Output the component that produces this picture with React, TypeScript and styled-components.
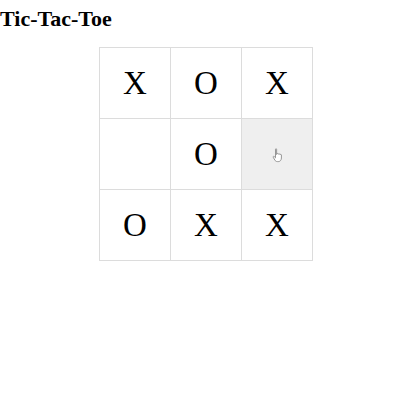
import React from "react";
import styled, { createGlobalStyle } from "styled-components";

const Global = createGlobalStyle`
  html, body { margin: 0; padding: 0; background: #fff; }
  body { font-family: "Liberation Serif", "Times New Roman", serif; color: #000; }
`;

const Page = styled.div`
  display: flex;
  flex-direction: column;
  align-items: flex-start;
  width: 400px;
  height: 408px;
`;

const Title = styled.h1`
  margin: 0;
  padding-top: 7px;
  font-size: 22px;
  line-height: 24px;
  font-weight: bold;
`;

const Board = styled.div`
  margin: 16px 0 0 99px;
  display: grid;
  grid-template-columns: repeat(3, 70px);
  grid-template-rows: repeat(3, 70px);
  gap: 1px;
  padding: 1px;
  background: #dcdcdc;
`;

const Cell = styled.div<{ $hover?: boolean }>`
  position: relative;
  display: flex;
  align-items: center;
  justify-content: center;
  background: ${(p) => (p.$hover ? "#efefef" : "#fff")};
  font-size: 33px;
  line-height: 1;
`;

const Cursor = styled.svg`
  position: absolute;
  left: 30px;
  top: 29px;
`;

const cells = ["X", "O", "X", "", "O", "", "O", "X", "X"];

export default function App() {
  return (
    <Page>
      <Global />
      <Title>Tic-Tac-Toe</Title>
      <Board>
        {cells.map((c, i) => (
          <Cell key={i} $hover={i === 5}>
            {c}
            {i === 5 && (
              <Cursor width="12" height="15" viewBox="0 0 12 15">
                <path
                  d="M3.5 1.2 C3.5 0.6 4.6 0.6 4.6 1.2 V6.5 L5 5.8 C5.3 5.3 6.2 5.5 6.2 6.1 L6.6 6 C7 5.6 7.8 5.8 7.8 6.4 L8.2 6.4 C8.6 6.1 9.4 6.3 9.4 6.9 V10 C9.4 12 8.2 13.6 6.3 13.6 H5.4 C4.2 13.6 3.4 13 2.8 12 L1.2 9.2 C0.9 8.6 1.6 8 2.2 8.5 L3.5 9.8 Z"
                  fill="#fff"
                  stroke="#8a8a8a"
                  strokeWidth="0.9"
                  strokeLinejoin="round"
                />
              </Cursor>
            )}
          </Cell>
        ))}
      </Board>
    </Page>
  );
}
